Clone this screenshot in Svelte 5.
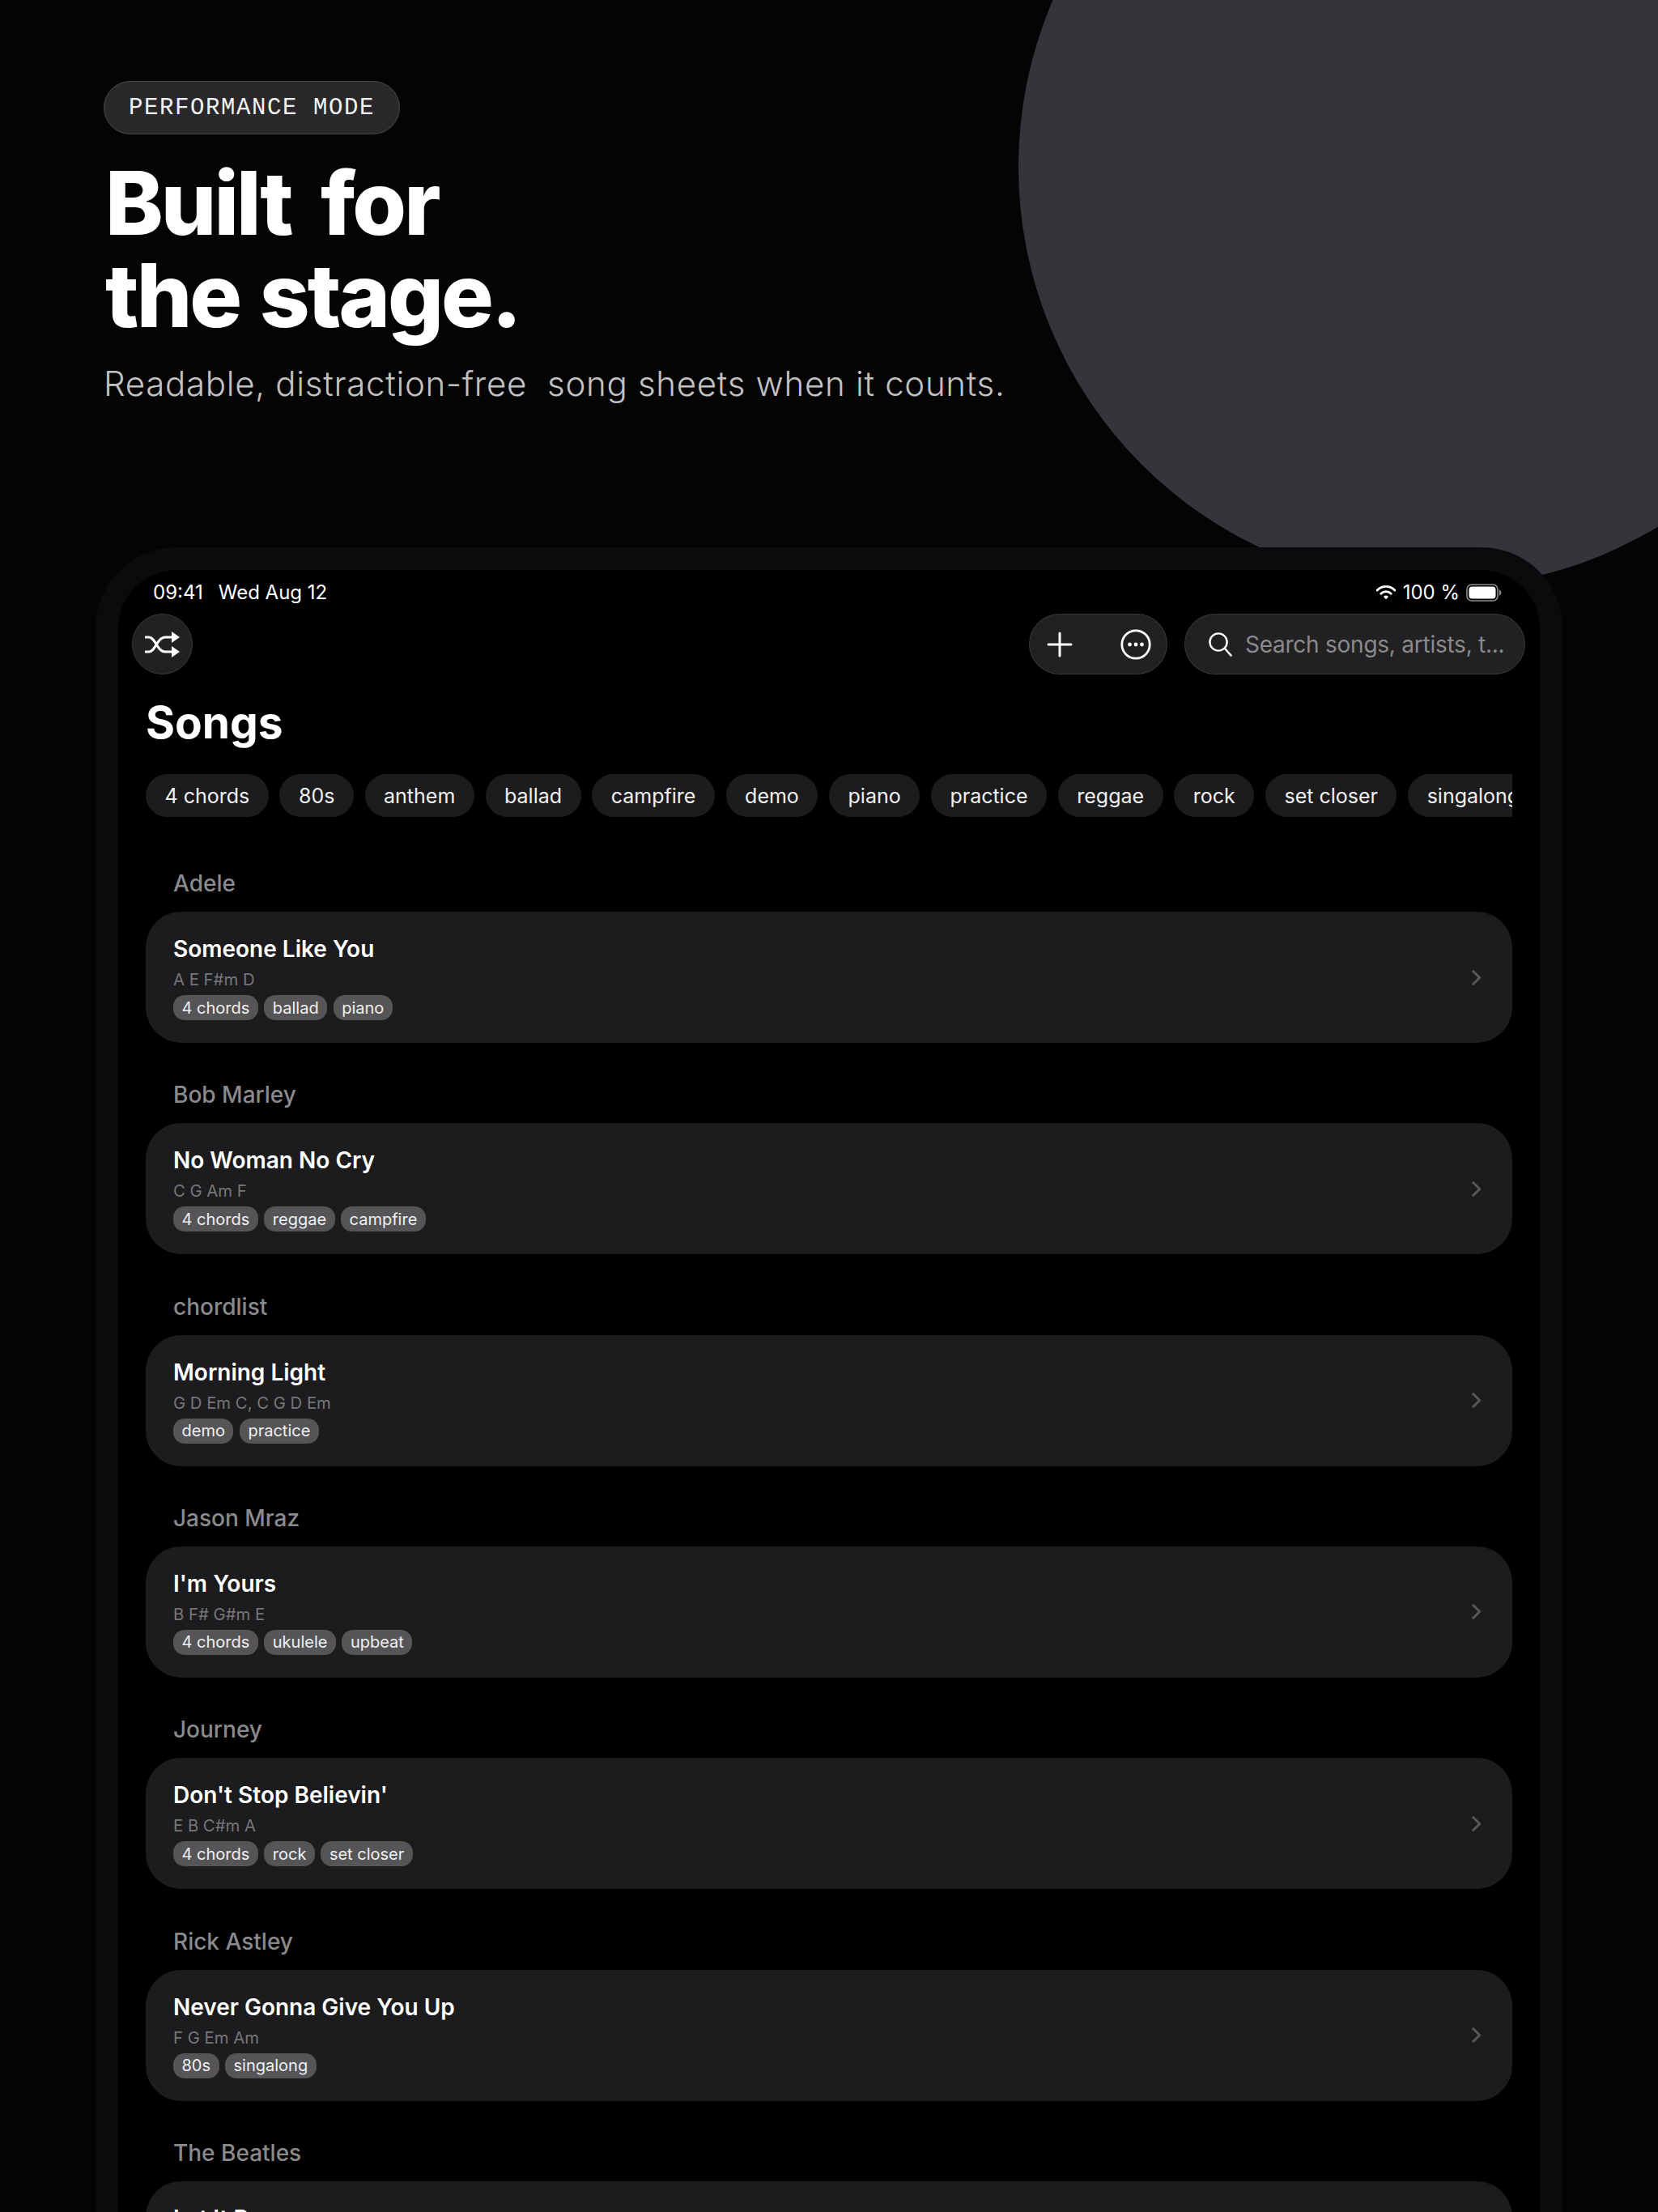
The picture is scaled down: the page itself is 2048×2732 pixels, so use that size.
<script>
  const filters = ['4 chords', '80s', 'anthem', 'ballad', 'campfire', 'demo', 'piano', 'practice', 'reggae', 'rock', 'set closer', 'singalong'];

  const groups = [
    { artist: 'Adele', title: 'Someone Like You', chords: 'A E F#m D', tags: ['4 chords', 'ballad', 'piano'] },
    { artist: 'Bob Marley', title: 'No Woman No Cry', chords: 'C G Am F', tags: ['4 chords', 'reggae', 'campfire'] },
    { artist: 'chordlist', title: 'Morning Light', chords: 'G D Em C, C G D Em', tags: ['demo', 'practice'] },
    { artist: 'Jason Mraz', title: "I'm Yours", chords: 'B F# G#m E', tags: ['4 chords', 'ukulele', 'upbeat'] },
    { artist: 'Journey', title: "Don't Stop Believin'", chords: 'E B C#m A', tags: ['4 chords', 'rock', 'set closer'] },
    { artist: 'Rick Astley', title: 'Never Gonna Give You Up', chords: 'F G Em Am', tags: ['80s', 'singalong'] },
    { artist: 'The Beatles', title: 'Let It Be', chords: 'C G Am F', tags: ['anthem', 'piano'] }
  ];
</script>

<div class="page">
  <div class="circle"></div>

  <header class="hero">
    <span class="badge">PERFORMANCE MODE</span>
    <h1><span class="first">Built for</span><br />the stage.</h1>
    <p class="sub">Readable, distraction-free&nbsp; song sheets when it counts.</p>
  </header>

  <div class="frame">
    <div class="screen">
      <div class="status">
        <div class="clock"><span>09:41</span><span>Wed Aug 12</span></div>
        <div class="sys">
          <svg width="26" height="20" viewBox="0 0 24 18" fill="none" stroke="#fff" stroke-width="2.6" stroke-linecap="round">
            <path d="M2 6.2a14 14 0 0 1 20 0" />
            <path d="M6.2 10.2a8.2 8.2 0 0 1 11.6 0" />
            <path d="M12 16.6l-2.8-3a4 4 0 0 1 5.6 0z" fill="#fff" stroke="none" />
          </svg>
          <span>100 %</span>
          <svg width="44" height="22" viewBox="0 0 44 22" fill="none">
            <rect x="1" y="1" width="38" height="20" rx="6" stroke="#8e8e90" stroke-width="1.6" />
            <rect x="3.5" y="3.5" width="33" height="15" rx="4" fill="#fff" />
            <path d="M41 7.5c1.6.5 2.4 2 2.4 3.5s-.8 3-2.4 3.5z" fill="#8e8e90" />
          </svg>
        </div>
      </div>

      <div class="toolbar">
        <button class="round glass" aria-label="Shuffle">
          <svg width="44" height="34" viewBox="0 0 44 34" fill="none" stroke="#fff" stroke-width="3" stroke-linecap="round">
            <path d="M1 26h4c8 0 10-18 20-18h9" />
            <path d="M1 8h4c8 0 10 18 20 18h9" />
            <path d="M33 1l10 7-10 7z" fill="#fff" stroke="none" />
            <path d="M33 19l10 7-10 7z" fill="#fff" stroke="none" />
          </svg>
        </button>
        <div class="spacer"></div>
        <div class="actions glass">
          <svg width="32" height="32" viewBox="0 0 32 32" stroke="#fff" stroke-width="3" stroke-linecap="round">
            <path d="M16 2v28M2 16h28" />
          </svg>
          <svg width="38" height="38" viewBox="0 0 38 38" fill="none">
            <circle cx="19" cy="19" r="17.2" stroke="#fff" stroke-width="2.8" />
            <circle cx="11.5" cy="19" r="2.4" fill="#fff" />
            <circle cx="19" cy="19" r="2.4" fill="#fff" />
            <circle cx="26.5" cy="19" r="2.4" fill="#fff" />
          </svg>
        </div>
        <div class="search glass">
          <svg width="30" height="32" viewBox="0 0 30 32" fill="none" stroke="#fff" stroke-width="2.4" stroke-linecap="round">
            <circle cx="13" cy="13" r="10.6" />
            <path d="M21 21l7.6 8.6" />
          </svg>
          <span>Search songs, artists, t...</span>
        </div>
      </div>

      <h2>Songs</h2>

      <div class="filters">
        {#each filters as f}
          <span class="chip">{f}</span>
        {/each}
      </div>

      <div class="list">
        {#each groups as g}
          <section>
            <h3>{g.artist}</h3>
            <div class="card">
              <div class="info">
                <div class="title">{g.title}</div>
                <div class="chords">{g.chords}</div>
                <div class="tags">
                  {#each g.tags as t}
                    <span class="tag">{t}</span>
                  {/each}
                </div>
              </div>
              <svg class="chevron" width="13" height="21" viewBox="0 0 14 22" fill="none" stroke="#58585a" stroke-width="3.2">
                <path d="M2 1.5l9.5 9.5L2 20.5" />
              </svg>
            </div>
          </section>
        {/each}
      </div>
    </div>
  </div>
</div>

<style>
  :global(body) {
    margin: 0;
    background: #040405;
  }
  .page {
    position: relative;
    height: 2732px;
    overflow: hidden;
    background: #040405;
    font-family: Inter, "Liberation Sans", sans-serif;
    color: #fff;
  }
  .circle {
    position: absolute;
    left: 1258px;
    top: -314px;
    width: 1040px;
    height: 1040px;
    border-radius: 50%;
    background: #35343b;
  }
  .hero {
    position: relative;
    height: 676px;
    box-sizing: border-box;
    padding: 100px 0 0 128px;
    display: flex;
    flex-direction: column;
    align-items: flex-start;
  }
  .badge {
    box-sizing: border-box;
    height: 66px;
    display: flex;
    align-items: center;
    padding: 0 30px;
    border-radius: 33px;
    background: #29292b;
    border: 1.5px solid #4a4a4c;
    font-family: "Liberation Mono", monospace;
    font-size: 29px;
    letter-spacing: 1.6px;
    color: #f2f2f2;
  }
  h1 {
    margin: 28px 0 0 2px;
    font-size: 108px;
    line-height: 114px;
    font-weight: 800;
    letter-spacing: -3px;
    word-spacing: 4px;
  }
  .first {
    word-spacing: 16px;
  }
  .sub {
    margin: 26px 0 0;
    font-size: 42px;
    line-height: 52px;
    font-weight: 300;
    letter-spacing: 0.7px;
    color: #c2c2c2;
    white-space: nowrap;
  }
  .frame {
    position: relative;
    margin-left: 118px;
    width: 1812px;
    height: 2100px;
    box-sizing: border-box;
    padding: 28px 28px 0;
    background: #0b0b0d;
    border-radius: 100px 100px 0 0;
  }
  .screen {
    height: 100%;
    background: #000;
    border-radius: 72px 72px 0 0;
    overflow: hidden;
  }
  .status {
    height: 54px;
    box-sizing: border-box;
    padding: 1px 47px 0 43px;
    display: flex;
    align-items: center;
    justify-content: space-between;
    font-size: 24px;
  }
  .clock {
    display: flex;
    gap: 19px;
  }
  .sys {
    display: flex;
    align-items: center;
    gap: 8px;
  }
  .toolbar {
    height: 75px;
    padding: 0 18px 0 17px;
    display: flex;
    align-items: center;
    gap: 21px;
  }
  .spacer {
    flex: 1;
  }
  .glass {
    box-sizing: border-box;
    background: #212123;
    border: 1.5px solid #3a3a3c;
  }
  .round {
    width: 75px;
    height: 75px;
    padding: 0;
    border-radius: 50%;
    display: flex;
    align-items: center;
    justify-content: center;
  }
  .actions {
    width: 171px;
    height: 75px;
    padding: 0 19px 0 21px;
    border-radius: 38px;
    display: flex;
    align-items: center;
    justify-content: space-between;
  }
  .search {
    width: 421px;
    height: 75px;
    padding: 0 0 0 28px;
    border-radius: 38px;
    display: flex;
    align-items: center;
    gap: 16px;
    font-size: 28px;
    letter-spacing: -0.25px;
    color: #8a8a8c;
    white-space: nowrap;
  }
  h2 {
    margin: 26px 0 0 34px;
    font-size: 55px;
    line-height: 66px;
    font-weight: 700;
  }
  .filters {
    margin: 31px 34px 0;
    display: flex;
    gap: 13.7px;
    overflow: hidden;
  }
  .chip {
    flex: none;
    height: 53px;
    padding: 0 23.5px;
    border-radius: 27px;
    display: flex;
    align-items: center;
    background: #1c1c1e;
    font-size: 25px;
    color: #f0f0f0;
  }
  .list {
    margin: 0 34px;
  }
  section {
    padding-top: 65px;
  }
  section + section {
    padding-top: 47.33px;
  }
  h3 {
    margin: 0 0 18px 34px;
    font-size: 28px;
    line-height: 34px;
    font-weight: 500;
    color: #8a8a8c;
  }
  .card {
    box-sizing: border-box;
    height: 162px;
    padding: 0 38px 0 34px;
    border-radius: 44px;
    background: #1c1c1e;
    display: flex;
    align-items: center;
    justify-content: space-between;
  }
  .title {
    font-size: 28px;
    line-height: 36px;
    font-weight: 570;
  }
  .chords {
    margin-top: 8px;
    font-size: 20.3px;
    line-height: 24px;
    color: #767678;
  }
  .tags {
    margin-top: 7px;
    display: flex;
    gap: 7.5px;
  }
  .tag {
    height: 31px;
    padding: 0 10.5px;
    border-radius: 14px;
    display: flex;
    align-items: center;
    background: #555557;
    font-size: 20px;
    color: #f0f0f0;
  }
</style>
